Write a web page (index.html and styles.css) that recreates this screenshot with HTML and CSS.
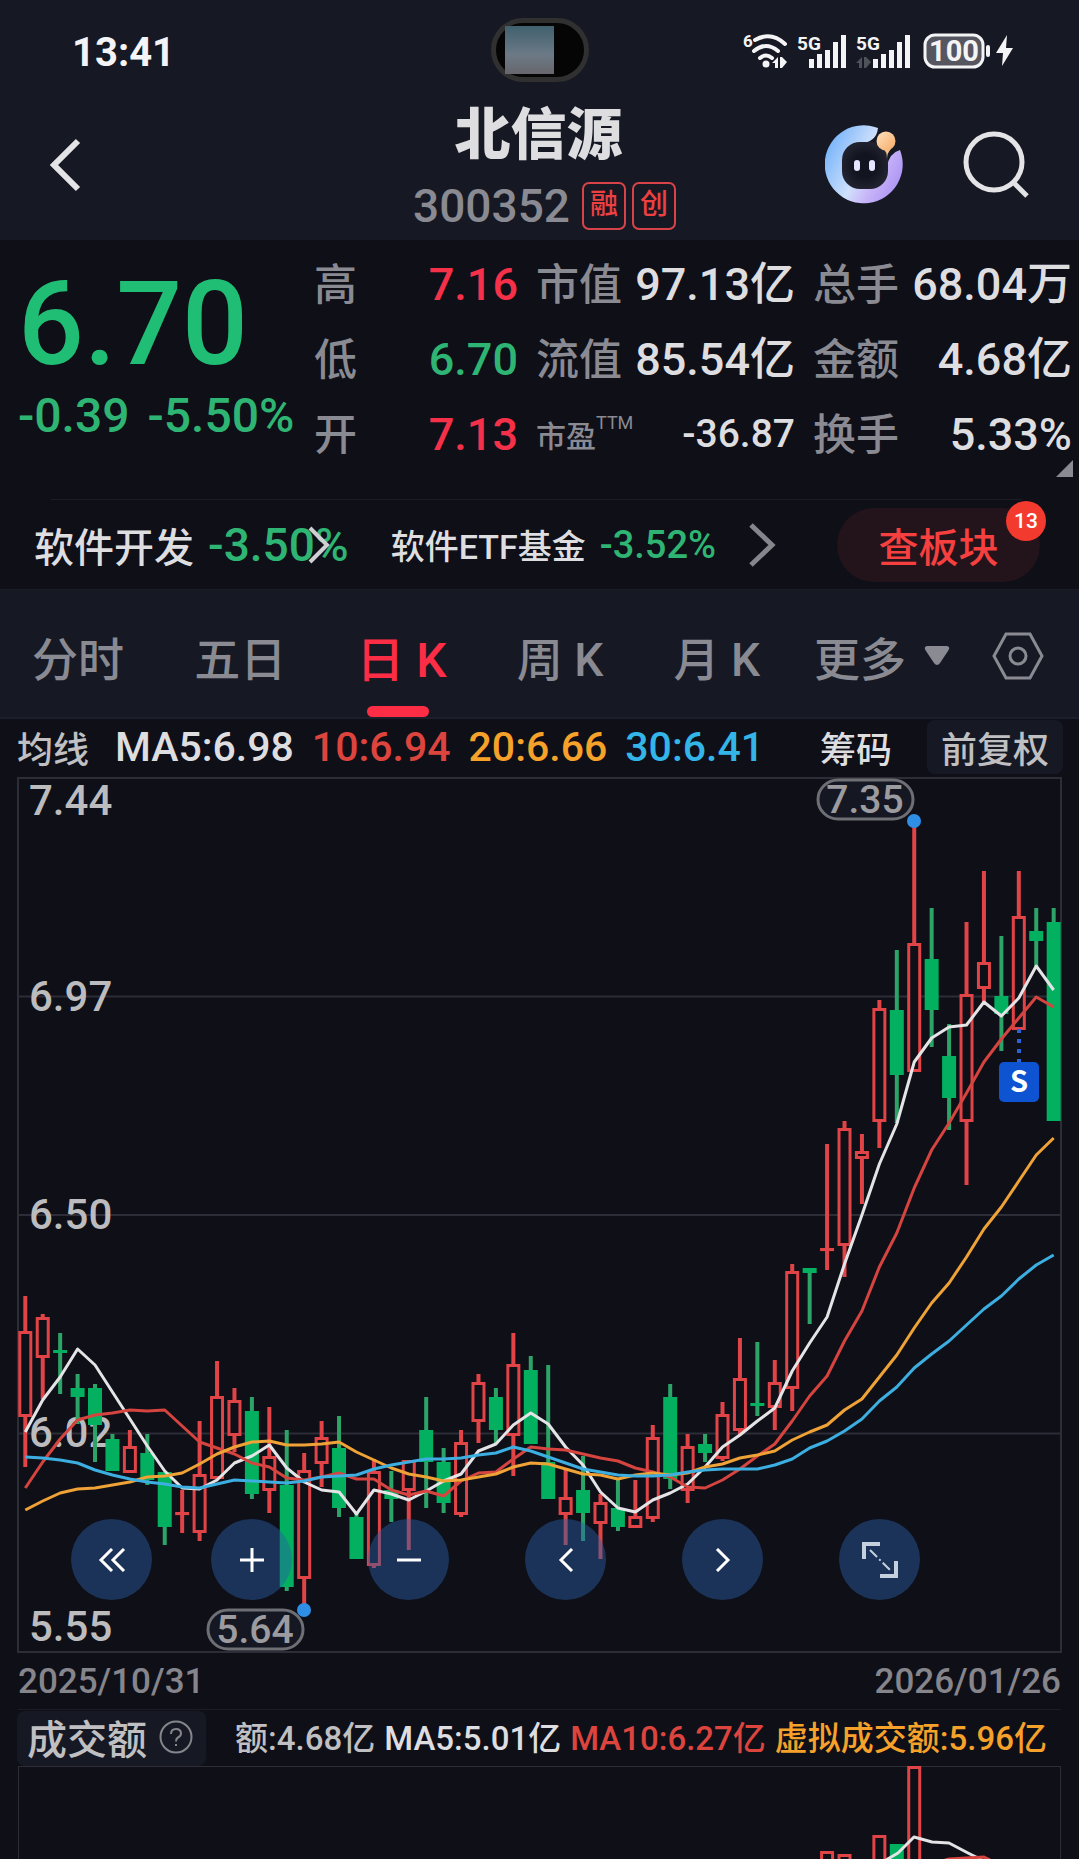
FILE: index.html
```html
<!DOCTYPE html>
<html lang="zh-CN">
<head>
    <meta charset="UTF-8">
    <meta name="viewport" content="width=device-width, initial-scale=1.0">
    <title>北信源 300352</title>
    <link rel="stylesheet" href="styles.css">
</head>
<body>
    <header class="header">
        <div class="status-bar">
            <span class="clock">13:41</span>
            <div class="camera"><span class="lens"></span></div>
            <svg class="status-icons" width="272" height="38" viewBox="-2 -2 272 38">
                <text x="0" y="14" font-size="17">6</text>
                <g class="wave">
                    <path d="M12 7Q28 -2 42 11"/>
                    <path d="M11 18Q23 8 35 18"/>
                    <path d="M17 25Q23 20 29 25"/>
                </g>
                <circle cx="23" cy="31" r="3.5"/>
                <path d="M29 30L35 24V35H32V30ZM37 24H39L44 29L39 35H37Z"/>
                <text x="54" y="17" font-size="19">5G</text>
                <path d="M66 26h5v9h-5zM74 21h5v14h-5zM82 17h5v18h-5zM90 9h5v26h-5zM98 2h5v33h-5z" class="bars"/>
                <text x="113" y="17" font-size="19">5G</text>
                <path d="M113 30L119 24V35H116V30ZM121 24H123L128 29L123 35H121Z" fill="#50525a"/>
                <path d="M130 26h5v9h-5zM138 21h5v14h-5zM146 17h5v18h-5zM154 9h5v26h-5zM162 2h5v33h-5z" class="bars"/>
                <rect x="182" y="2" width="58" height="32" rx="10" class="battery"/>
                <text x="211" y="28" font-size="29" text-anchor="middle">100</text>
                <rect x="243" y="12" width="4" height="12" rx="2"/>
                <path d="M264 2L253 20H260L259 33L270 15H263Z"/>
            </svg>
        </div>
        <div class="title-bar">
            <button class="icon-btn back" aria-label="返回">
                <svg width="40" height="60" viewBox="0 0 40 60"><path d="M34 6L10 30L34 54"/></svg>
            </button>
            <div class="title">
                <h1>北信源</h1>
                <div class="code">300352 <span class="tag">融</span><span class="tag">创</span></div>
            </div>
            <div class="title-actions">
                <button class="icon-btn" aria-label="智能助手">
                    <svg width="80" height="80" viewBox="0 0 80 80">
                        <defs>
                            <linearGradient id="ring" x1="0" y1="0.2" x2="1" y2="0.7">
                                <stop offset="0" stop-color="#6fb0fa"/>
                                <stop offset="0.5" stop-color="#cfe0fb"/>
                                <stop offset="0.72" stop-color="#c8b4f8"/>
                                <stop offset="1" stop-color="#ac94f4"/>
                            </linearGradient>
                            <radialGradient id="face"><stop offset="0.5" stop-color="#121420"/><stop offset="1" stop-color="#20222f"/></radialGradient>
                            <linearGradient id="ball" x1="0" y1="0" x2="1" y2="1">
                                <stop offset="0" stop-color="#ffe2bd"/><stop offset="1" stop-color="#f6ab68"/>
                            </linearGradient>
                        </defs>
                        <path d="M53 3A39 39 0 1 0 75 25Q64 28 62 42L30 60L18 40L30 18Q51 20 53 3Z" fill="url(#ring)"/>
                        <rect x="17" y="17" width="46" height="47" rx="18" fill="url(#face)"/>
                        <path d="M62 34Q62 26 58 24L66 24Q62 28 62 34Z" fill="#f6c08c"/>
                        <circle cx="61" cy="16" r="9.5" fill="url(#ball)"/>
                        <rect x="29" y="35" width="6" height="11" rx="3" fill="#e4e6ff"/>
                        <rect x="44" y="35" width="6" height="11" rx="3" fill="#e4e6ff"/>
                    </svg>
                </button>
                <button class="icon-btn" aria-label="搜索">
                    <svg width="70" height="70" viewBox="0 0 70 70"><circle cx="31" cy="32" r="28"/><path d="M49 51L64 66"/></svg>
                </button>
            </div>
        </div>
    </header>

    <section class="quote">
        <div class="price down">
            <div class="last">6.70</div>
            <div class="change"><span>-0.39</span><span>-5.50%</span></div>
        </div>
        <dl>
            <div><dt>高</dt><dd class="up">7.16</dd></div>
            <div><dt>低</dt><dd class="down">6.70</dd></div>
            <div><dt>开</dt><dd class="up">7.13</dd></div>
        </dl>
        <dl>
            <div><dt>市值</dt><dd>97.13亿</dd></div>
            <div><dt>流值</dt><dd>85.54亿</dd></div>
            <div class="small"><dt>市盈<sup>TTM</sup></dt><dd>-36.87</dd></div>
        </dl>
        <dl>
            <div><dt>总手</dt><dd>68.04万</dd></div>
            <div><dt>金额</dt><dd>4.68亿</dd></div>
            <div><dt>换手</dt><dd>5.33%</dd></div>
        </dl>
        <span class="corner"></span>
    </section>

    <section class="sectors">
        <a href="#" class="sector">软件开发 <span class="down">-3.50%</span>
            <svg class="over" width="24" height="40" viewBox="0 0 24 40"><path d="M3 3L20 20L3 37"/></svg>
        </a>
        <a href="#" class="sector etf">软件ETF基金 <span class="down">-3.52%</span>
            <svg class="more" width="28" height="46" viewBox="0 0 28 46"><path d="M3 3L24 23L3 43"/></svg>
        </a>
        <button class="block-btn">查板块<span class="badge">13</span></button>
    </section>

    <nav class="tabs">
        <div class="periods">
            <button>分时</button>
            <button>五日</button>
            <button class="active">日 K</button>
            <button>周 K</button>
            <button>月 K</button>
        </div>
        <button class="more-btn">更多
            <svg width="26" height="20" viewBox="0 0 26 20"><path d="M3 0H23Q27 1 24 5L16 17Q13 21 10 17L2 5Q-1 1 3 0Z"/></svg>
        </button>
        <button class="icon-btn setting" aria-label="设置">
            <svg width="52" height="48" viewBox="0 0 52 48"><path d="M14 2H38L50 24L38 46H14L2 24Z"/><circle cx="26" cy="24" r="8"/></svg>
        </button>
    </nav>

    <div class="ma-row">
        <span class="ma-name">均线</span>
        <span>MA5:6.98</span>
        <span class="ma10">10:6.94</span>
        <span class="ma20">20:6.66</span>
        <span class="ma30">30:6.41</span>
        <button class="chips">筹码</button>
        <button class="adjust">前复权</button>
    </div>

    <section class="chart">
        <svg id="kline" viewBox="0 0 1043 874">
            <g class="grid">
                <path d="M0 218.5H1043M0 437H1043M0 655.5H1043"/>
                <rect x="0" y="0" width="1043" height="874"/>
            </g>
            <g class="axis">
                <text x="11" y="37">7.44</text>
                <text x="11" y="233">6.97</text>
                <text x="11" y="451">6.50</text>
                <text x="11" y="669">6.02</text>
                <text x="11" y="863">5.55</text>
            </g>
            <g id="candles"></g>
            <g id="averages"></g>
            <g class="mark">
                <rect x="800" y="2" width="95" height="39" rx="20"/>
                <text x="847" y="35">7.35</text>
                <circle cx="896" cy="43" r="7"/>
                <rect x="190" y="832" width="95" height="39" rx="20"/>
                <text x="237" y="865">5.64</text>
                <circle cx="286" cy="832" r="7"/>
            </g>
            <g class="sell">
                <path d="M1001 251V284"/>
                <rect x="981" y="284" width="40" height="40" rx="5"/>
                <text x="1001" y="314">S</text>
            </g>
        </svg>
        <div class="tools">
            <button aria-label="最早"><svg width="28" height="24" viewBox="0 0 28 24"><path d="M14 1L3 12L14 23M26 1L15 12L26 23"/></svg></button>
            <button aria-label="放大"><svg width="24" height="24" viewBox="0 0 24 24"><path d="M0 12H24M12 0V24"/></svg></button>
            <button aria-label="缩小"><svg width="24" height="24" viewBox="0 0 24 24"><path d="M0 12H24"/></svg></button>
            <button aria-label="左移"><svg width="24" height="24" viewBox="0 0 24 24"><path d="M18 1L7 12L18 23"/></svg></button>
            <button aria-label="右移"><svg width="24" height="24" viewBox="0 0 24 24"><path d="M6 1L17 12L6 23"/></svg></button>
            <button aria-label="全屏" class="full"><svg width="36" height="36" viewBox="0 0 36 36"><path d="M18 2H2V17M18 34H34V19"/><path d="M8 8L28 28" class="dash"/></svg></button>
        </div>
    </section>

    <div class="dates"><span>2025/10/31</span><span>2026/01/26</span></div>

    <div class="vol-row">
        <button class="vol-name">成交额
            <svg width="34" height="34" viewBox="0 0 34 34"><circle cx="17" cy="17" r="15.5"/><path d="M12 14Q12 9 17 9Q22 9 22 13.500Q22 16 19 17.500Q17 18.500 17 21.500M17 24V26"/></svg>
        </button>
        <div class="vol-legend">
            <span class="amount">额:4.68亿</span>
            <span>MA5:5.01亿</span>
            <span class="ma10">MA10:6.27亿</span>
            <span class="ma20">虚拟成交额:5.96亿</span>
        </div>
    </div>

    <section class="chart">
        <svg id="volume" viewBox="0 0 1043 93">
            <path class="grid" d="M0 93V0H1043V93"/>
        </svg>
    </section>

    <script>
        // K线数据: [涨跌, 最高, 实体上沿, 实体下沿, 最低]，单位为图表坐标
        const candles = [
            ['r', 518, 553, 639, 689], ['r', 536, 539, 580, 621], ['g', 555, 572, 575, 616], ['g', 596, 610, 619, 646],
            ['g', 606, 610, 647, 684], ['g', 656, 661, 693, 693], ['r', 652, 668, 695, 695], ['g', 656, 675, 702, 707],
            ['g', 694, 694, 749, 767], ['r', 712, 734, 737, 755], ['r', 643, 696, 755, 763], ['r', 583, 618, 701, 701],
            ['r', 610, 622, 658, 674], ['g', 619, 633, 716, 721], ['r', 629, 678, 713, 735], ['g', 652, 707, 809, 813],
            ['r', 675, 692, 801, 827], ['r', 643, 659, 686, 709], ['g', 638, 670, 730, 739], ['g', 735, 739, 781, 781],
            ['r', 681, 693, 788, 790], ['g', 693, 712, 721, 744], ['r', 682, 682, 713, 772], ['g', 619, 652, 684, 730],
            ['g', 670, 684, 725, 735], ['r', 652, 664, 737, 739], ['r', 596, 604, 644, 665], ['g', 610, 619, 652, 665],
            ['r', 555, 586, 658, 698], ['g', 578, 592, 666, 666], ['g', 587, 684, 721, 721], ['r', 692, 719, 737, 767],
            ['g', 678, 712, 735, 763], ['r', 716, 724, 746, 781], ['g', 702, 730, 749, 753], ['r', 702, 738, 750, 750],
            ['r', 647, 659, 741, 744], ['g', 606, 619, 701, 711], ['r', 656, 668, 713, 725], ['g', 656, 666, 675, 684],
            ['r', 624, 636, 681, 683], ['r', 560, 600, 653, 657], ['g', 564, 625, 628, 638], ['r', 582, 604, 630, 652],
            ['r', 486, 493, 611, 633], ['g', 490, 490, 495, 546], ['r', 366, 470, 473, 492], ['r', 343, 350, 468, 499],
            ['r', 356, 373, 381, 426], ['r', 222, 230, 344, 370], ['g', 172, 232, 297, 345], ['r', 44, 165, 294, 294],
            ['g', 130, 181, 232, 269], ['g', 246, 278, 320, 352], ['r', 144, 216, 344, 407], ['r', 93, 184, 211, 224],
            ['g', 158, 218, 236, 273], ['r', 93, 138, 252, 252], ['g', 130, 153, 163, 189], ['g', 130, 144, 343, 343]
        ];

        // 均线
        const averages = {
            ma5: [654, 622, 599, 571, 587, 614, 641, 668, 693, 710, 711, 702, 685, 678, 667, 690, 704, 712, 714, 736,
                712, 716, 722, 713, 703, 696, 673, 666, 647, 635, 646, 669, 687, 714, 730, 734, 722, 715, 706, 689,
                669, 657, 643, 630, 593, 565, 539, 486, 437, 386, 346, 284, 260, 249, 247, 224, 238, 220, 188, 212],
            ma10: [710, 684, 661, 642, 637, 635, 632, 633, 632, 648, 664, 670, 676, 685, 689, 700, 702, 699, 695, 701,
                701, 712, 717, 713, 718, 703, 695, 694, 681, 669, 671, 672, 676, 680, 683, 690, 694, 699, 709, 710,
                702, 691, 678, 666, 643, 618, 598, 563, 533, 489, 455, 410, 372, 345, 315, 284, 261, 240, 219, 229],
            ma20: [732, 723, 715, 711, 710, 707, 704, 699, 698, 695, 686, 676, 669, 664, 663, 667, 667, 666, 664, 674,
                682, 690, 696, 699, 703, 702, 699, 696, 689, 685, 686, 691, 696, 697, 701, 697, 695, 697, 695, 689,
                686, 680, 677, 673, 662, 654, 647, 632, 621, 599, 577, 550, 525, 505, 479, 451, 429, 403, 377, 360],
            ma30: [679, 680, 682, 685, 692, 697, 701, 704, 706, 709, 710, 706, 702, 703, 704, 705, 703, 699, 698, 697,
                691, 687, 684, 681, 681, 680, 677, 675, 669, 673, 679, 685, 691, 694, 697, 698, 698, 697, 694, 692,
                691, 691, 691, 687, 681, 670, 663, 653, 641, 623, 609, 590, 576, 563, 547, 531, 518, 501, 487, 477]
        };

        // 成交额: [序号, 涨跌, 柱顶]
        const volumes = [[46, 'r', 85], [47, 'r', 88], [49, 'r', 69], [50, 'g', 78], [51, 'r', 0]];

        const first = 7.3;
        const step = 17.43;
        const barWidth = 14;

        function centerOf(i) {
            return first + step * i;
        }

        function add(parent, tag, attrs) {
            const el = document.createElementNS('http://www.w3.org/2000/svg', tag);
            for (const key in attrs) {
                el.setAttribute(key, attrs[key]);
            }
            parent.appendChild(el);
        }

        // 阳线空心，阴线实心
        function drawBar(parent, i, kind, top, bottom) {
            const left = centerOf(i) - barWidth / 2;
            if (kind === 'r') {
                add(parent, 'rect', { class: 'rise', x: left + 1.5, y: top + 1.5, width: barWidth - 3, height: Math.max(bottom - top - 3, 0.1) });
            } else {
                add(parent, 'rect', { class: 'fall', x: left, y: top, width: barWidth, height: bottom - top });
            }
        }

        function drawCandles() {
            const group = document.getElementById('candles');
            candles.forEach(([kind, high, top, bottom, low], i) => {
                const x = centerOf(i);
                add(group, 'path', { class: 'wick-' + kind, d: `M${x} ${high}V${top}M${x} ${bottom}V${low}` });
                drawBar(group, i, kind, top, bottom);
            });
        }

        function drawAverages() {
            const group = document.getElementById('averages');
            ['ma5', 'ma10', 'ma20', 'ma30'].forEach(name => {
                const points = averages[name].map((y, i) => centerOf(i) + ',' + y).join(' ');
                add(group, 'polyline', { class: name, points: points });
            });
        }

        function drawVolume() {
            const svg = document.getElementById('volume');
            volumes.forEach(([i, kind, top]) => drawBar(svg, i, kind, top, 110));
            add(svg, 'polyline', { class: 'ma5', points: '868,94 880,87 896,71 914,76 931,77 950,87 964,94' });
            add(svg, 'polyline', { class: 'ma10', points: '924,95 931,93 966,91 974,95' });
        }

        drawCandles();
        drawAverages();
        drawVolume();
    </script>
</body>
</html>
```

FILE: styles.css
```css
* {
    box-sizing: border-box;
}
body {
    margin: 0;
    background-color: #0f0f18;
    color: #dedee0;
    font-family: Roboto, "Noto Sans CJK SC", sans-serif;
    font-weight: 500;
    overflow-x: hidden;
}
button {
    background: none;
    border: none;
    padding: 0;
    color: inherit;
    font: inherit;
    cursor: pointer;
}
a {
    color: inherit;
    text-decoration: none;
}
svg {
    display: block;
}
.up {
    color: #f5314a;
}
.down {
    color: #2fb573;
}

/* 顶部 */
.header {
    background-color: #161924;
    height: 240px;
}
.status-bar {
    display: grid;
    grid-template-columns: 1fr auto 1fr;
    align-items: center;
    padding: 18px 66px 0 66px;
    color: #f4f4f6;
}
.clock {
    padding: 4px 0 0 6px;
    font-size: 40px;
    font-weight: 700;
}
.camera {
    width: 98px;
    height: 64px;
    border: 5px solid #303030;
    border-radius: 32px;
    background-color: #050505;
    padding: 3px 0 3px 9px;
}
.lens {
    display: block;
    width: 49px;
    height: 48px;
    background: linear-gradient(#40606e, #6c7a86 60%, #68666c);
}
.status-icons {
    justify-self: end;
    fill: #f4f4f6;
    font-weight: 700;
}
.status-icons .wave {
    fill: none;
    stroke: #f4f4f6;
    stroke-width: 4;
    stroke-linecap: round;
}
.status-icons .battery {
    fill: #55565f;
    stroke: #f4f4f6;
    stroke-width: 3;
}
.title-bar {
    display: grid;
    grid-template-columns: 1fr auto 1fr;
    align-items: center;
    padding: 12px 46px 0 44px;
}
.title {
    display: flex;
    flex-direction: column;
    align-items: center;
    padding-top: 5px;
}
.title h1 {
    margin: 0;
    font-size: 56px;
    line-height: 72px;
    font-weight: 900;
}
.code {
    display: flex;
    align-items: center;
    gap: 6px;
    margin: 5px 0 0 12px;
    font-size: 46px;
    line-height: 60px;
    color: #8a8a92;
}
.tag {
    border: 2px solid #d8434a;
    border-radius: 7px;
    width: 44px;
    height: 48px;
    font-size: 28px;
    line-height: 42px;
    text-align: center;
    color: #ee4040;
}
.tag:first-of-type {
    margin-left: 6px;
}
.icon-btn svg {
    fill: none;
    stroke-width: 5;
}
.back svg, .title-actions button:last-child svg {
    stroke: #e4e4e6;
}
.back svg {
    stroke-width: 6;
}
.title-actions {
    display: flex;
    justify-content: flex-end;
    align-items: center;
    gap: 58px;
}

/* 行情 */
.quote {
    position: relative;
    display: grid;
    grid-template-columns: 278px 204px 1fr 1fr;
    column-gap: 18px;
    padding: 7px 7px 0 18px;
    height: 260px;
}
.quote::after {
    content: "";
    position: absolute;
    left: 51px;
    right: 57px;
    bottom: 0;
    height: 1px;
    background-color: #1b1c26;
}
.last {
    font-size: 116px;
    line-height: 136px;
    padding-top: 9px;
    color: #20be74;
}
.change {
    display: flex;
    gap: 18px;
    font-size: 48px;
    line-height: 48px;
    white-space: nowrap;
}
.quote dl {
    margin: 0;
}
.quote dl div {
    display: flex;
    justify-content: space-between;
    align-items: baseline;
    height: 75px;
    font-size: 45px;
    line-height: 75px;
    white-space: nowrap;
}
.quote dt {
    font-size: 43px;
    color: #8a8a92;
}
.quote dd {
    margin: 0;
}
.quote .small {
    font-size: 39px;
}
.quote .small dt {
    font-size: 30px;
}
.quote sup {
    font-size: 18px;
    font-weight: 400;
    line-height: 0;
    vertical-align: 18px;
}
.corner {
    position: absolute;
    right: 6px;
    bottom: 23px;
    border-left: 17px solid transparent;
    border-bottom: 17px solid #8a8a92;
}
.sectors {
    display: flex;
    align-items: center;
    height: 90px;
    padding: 0 39px 0 34px;
    border-bottom: 1px solid #1b1c26;
    font-size: 40px;
}
.sector {
    position: relative;
    display: flex;
    align-items: center;
    gap: 14px;
    margin-right: 42px;
    white-space: nowrap;
}
.sector svg {
    fill: none;
    stroke: #d0d0d4;
    stroke-width: 4;
}
.sector .over {
    position: absolute;
    right: 18px;
}
.sector .more {
    margin-left: 18px;
    stroke: #85858b;
    stroke-width: 5;
}
.sector .down {
    font-size: 46px;
}
.etf {
    font-size: 34px;
}
.etf .down {
    font-size: 38px;
}
.block-btn {
    position: relative;
    margin-left: auto;
    width: 203px;
    height: 74px;
    border-radius: 37px;
    background-color: #23131b;
    color: #f5403f;
}
.badge {
    position: absolute;
    top: -7px;
    right: -6px;
    width: 40px;
    height: 40px;
    border-radius: 20px;
    background-color: #f23a2f;
    color: #fff;
    font-size: 21px;
    line-height: 40px;
}

/* 周期切换 */
.tabs {
    display: flex;
    align-items: center;
    height: 129px;
    padding: 5px 35px 0 32px;
    background-color: #161924;
    border-bottom: 2px solid #1c1f2b;
    color: #8a8a92;
    font-size: 46px;
}
.periods {
    flex: 1;
    display: flex;
    justify-content: space-between;
    align-self: stretch;
    margin-right: 54px;
}
.periods .active {
    position: relative;
    color: #fd2d46;
    font-size: 48px;
}
.periods .active::after {
    content: "";
    position: absolute;
    left: 50%;
    bottom: 0;
    width: 62px;
    height: 11px;
    margin-left: -34px;
    border-radius: 6px;
    background-color: #fd2d46;
}
.more-btn {
    display: flex;
    align-items: center;
    gap: 18px;
}
.more-btn svg {
    fill: #8a8a92;
}
.setting {
    margin-left: 42px;
}
.setting svg {
    stroke: #8a8a92;
    stroke-width: 3;
}

/* 均线 */
.ma-row {
    display: flex;
    align-items: center;
    gap: 18px;
    height: 59px;
    padding: 0 16px 4px 17px;
    font-size: 41px;
    white-space: nowrap;
}
.ma-name, .chips, .adjust {
    font-size: 36px;
    color: #c0c0c2;
}
.ma-name {
    margin-right: 8px;
}
.ma-row .ma10, .vol-row .ma10 {
    color: #dc443e;
}
.ma-row .ma20, .vol-row .ma20 {
    color: #f5a12a;
}
.ma-row .ma30 {
    color: #33b5e8;
}
.chips {
    margin-left: auto;
    margin-right: 17px;
    color: #dedee0;
}
.adjust {
    width: 136px;
    height: 54px;
    border-radius: 8px;
    background-color: #161924;
}

/* 图表 */
.chart {
    position: relative;
    margin: 0 18px;
}
.chart > svg {
    width: 100%;
    height: auto;
    overflow: visible;
}
#volume {
    overflow: hidden;
}
.grid {
    fill: none;
    stroke: #2c2d37;
    stroke-width: 2;
}
.axis {
    fill: #bcbcbe;
    font-size: 42px;
}
.rise {
    fill: #0f0f18;
    stroke: #e04446;
    stroke-width: 3;
}
.fall {
    fill: #02b060;
}
.wick-r, .wick-g {
    stroke: #e04446;
    stroke-width: 4;
}
.wick-g {
    stroke: #2da467;
}
polyline {
    fill: none;
    stroke-width: 3;
    stroke-linejoin: round;
}
polyline.ma5 {
    stroke: #e4e4e6;
}
polyline.ma10 {
    stroke: #d5443f;
}
polyline.ma20 {
    stroke: #efa236;
}
polyline.ma30 {
    stroke: #3caee0;
}
.mark rect {
    fill: #151822;
    stroke: #6e6f74;
    stroke-width: 3;
}
.mark text {
    fill: #9c9ca0;
    font-size: 39px;
    text-anchor: middle;
}
.mark circle {
    fill: #2f8fe6;
}
.sell path {
    stroke: #2c62d8;
    stroke-width: 4;
    stroke-dasharray: 4 6;
}
.sell rect {
    fill: #0d53d2;
}
.sell text {
    fill: #fff;
    font-family: "Noto Sans CJK SC", sans-serif;
    font-size: 29px;
    font-weight: 700;
    text-anchor: middle;
}
.tools {
    position: absolute;
    left: 53px;
    bottom: 52px;
    display: flex;
    gap: 76px;
}
.tools button {
    display: flex;
    align-items: center;
    justify-content: center;
    width: 81px;
    height: 81px;
    border-radius: 50%;
    background-color: rgba(42, 95, 166, 0.45);
}
.tools button:first-child {
    margin-right: -17px;
}
.tools svg {
    fill: none;
    stroke: #fff;
    stroke-width: 3;
}
.tools .full svg {
    stroke: #c5d0de;
    stroke-width: 4;
}
.tools .dash {
    stroke-width: 2;
    stroke-dasharray: 10 3 2 3;
}
.dates {
    display: flex;
    justify-content: space-between;
    margin: 0 18px;
    height: 58px;
    line-height: 60px;
    border-bottom: 1px solid #1b1c26;
    color: #85858b;
    font-size: 35px;
}

/* 成交额 */
.vol-row {
    display: flex;
    align-items: center;
    justify-content: space-between;
    height: 56px;
    padding: 0 32px 0 17px;
    white-space: nowrap;
}
.vol-name {
    display: flex;
    align-items: center;
    gap: 12px;
    height: 55px;
    padding: 0 13px 2px 10px;
    border-radius: 8px;
    background-color: #161924;
    color: #c0c0c2;
    font-size: 40px;
}
.vol-name svg {
    fill: none;
    stroke: #85858b;
    stroke-width: 2;
}
.vol-legend {
    display: flex;
    gap: 9px;
    padding-bottom: 4px;
    font-size: 33px;
}
.amount {
    color: #c0c0c2;
}
```
